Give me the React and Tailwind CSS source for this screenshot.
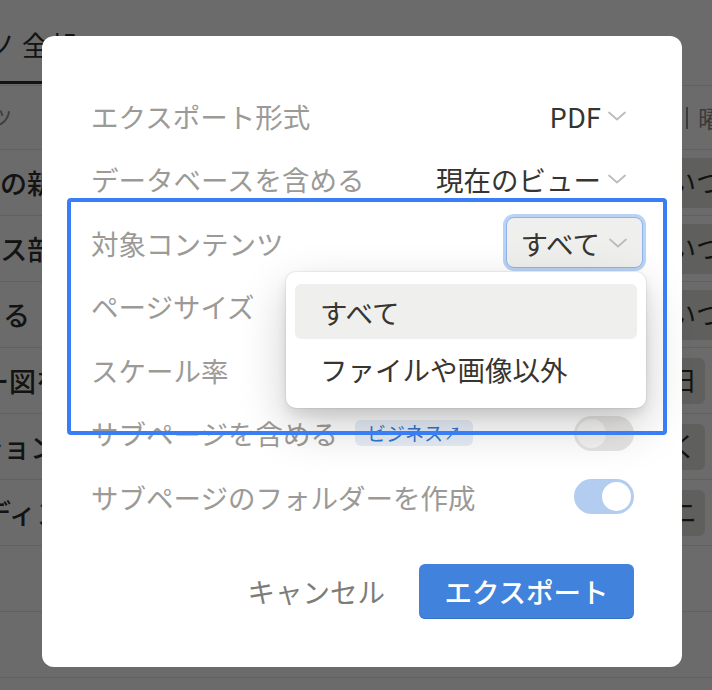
import React from "react";

const FONT = "font-['Noto_Sans_CJK_JP','Noto_Sans',sans-serif]";

function Chevron() {
  return (
    <svg width="22" height="12" viewBox="0 0 22 12" fill="none" className="shrink-0">
      <path d="M3 2.5l8 7 8-7" stroke="#bdbcb9" strokeWidth="1.8" strokeLinecap="round" strokeLinejoin="round" />
    </svg>
  );
}

function Value({ text }) {
  return (
    <div className="mr-[6px] flex items-center gap-[5px] text-[#37352f]">
      <span>{text}</span>
      <Chevron />
    </div>
  );
}

function Row({ label, children }) {
  return (
    <div className="flex h-[63.5px] items-center justify-between">
      <div className="flex items-center gap-[17px] text-[#9b9a97]">{label}</div>
      {children}
    </div>
  );
}

function BgRow({ left, leftMl, right, rightType }) {
  return (
    <div className="flex h-[66px] items-center justify-between border-b border-[#e6e6e4]">
      <div className="flex flex-col">
        <span className="whitespace-nowrap text-[27px] font-medium leading-[36px] text-[#2f2e2a]" style={{ marginLeft: leftMl }}>
          {left}
        </span>
      </div>
      {rightType === "full" ? (
        <div className="-mr-[42px] flex h-[50px] items-center rounded-[6px] bg-[#e3e2e0] pl-[8px] pr-[4px] text-[27px] text-[#2f2e2a]">
          <span className="whitespace-nowrap">いつも</span>
        </div>
      ) : (
        <div className="mr-[7px] flex h-[46px] items-center rounded-[6px] bg-[#e3e2e0] pl-[24px] pr-[8px] text-[27px] text-[#2f2e2a]">
          <span className="whitespace-nowrap">{right}</span>
        </div>
      )}
    </div>
  );
}

export default function App() {
  return (
    <div className={`relative h-[690px] w-[712px] overflow-hidden bg-white ${FONT}`}>
      {/* background page */}
      <div className="flex flex-col">
        <div className="flex h-[86px] items-start border-b border-[#e6e6e4]">
          <div className="mt-[27px] flex flex-col">
            <span className="-ml-[11px] whitespace-nowrap text-[27px] leading-[36px] text-[#2f2e2a]">ノ 全部</span>
            <div className="mt-[18px] h-[3px] w-[90px] bg-[#2f2e2a]" />
          </div>
        </div>
        <div className="flex h-[64px] items-center justify-between border-b border-[#e6e6e4]">
          <span className="-ml-[8px] text-[20px] text-[#8f8e8a]">ツ</span>
          <div className="flex items-center gap-[10px] text-[24px] text-[#8f8e8a]">
            <span className="h-[22px] w-[2px] bg-[#8f8e8a]" />
            <span className="-mr-[10px]">曜</span>
          </div>
        </div>
        <BgRow left="の新しい" leftMl="0px" rightType="full" />
        <BgRow left="イス部" leftMl="-26px" rightType="full" />
        <BgRow left="る" leftMl="3px" rightType="full" />
        <BgRow left="ー図を" leftMl="-18px" right="日" />
        <BgRow left="ション" leftMl="-24px" right="く" />
        <BgRow left="ディン" leftMl="-16px" right="ニ" />
        <div className="h-[66px] border-b border-[#e6e6e4]" />
        <div className="h-[66px] border-b border-[#e6e6e4]" />
      </div>

      {/* dim overlay */}
      <div className="absolute inset-0 bg-black/[0.58]" />

      {/* modal */}
      <div className="absolute left-[42px] top-[36px] flex h-[631px] w-[640px] flex-col rounded-[12px] bg-white pb-[48px] pl-[49px] pr-[48px] pt-[48px] text-[27.5px] leading-[40px]">
        <div className="flex flex-col">
          <Row label="エクスポート形式">
            <Value text="PDF" />
          </Row>
          <Row label="データベースを含める">
            <Value text="現在のビュー" />
          </Row>
          <Row label="対象コンテンツ">
            <div className="-mr-[9px] flex h-[51px] w-[137px] items-center justify-between rounded-[8px] border-[1.5px] border-[#8fb4ea] bg-[#efefee] pl-[13.5px] pr-[13.5px] text-[#37352f] shadow-[0_0_0_3px_#bad2f3]">
              <span>すべて</span>
              <Chevron />
            </div>
          </Row>
          <Row label="ページサイズ">
            <Value text="A4" />
          </Row>
          <Row label="スケール率">
            <Value text="100%" />
          </Row>
          <Row
            label={
              <>
                <span>サブページを含める</span>
                <span className="flex h-[26px] items-center gap-[1px] rounded-[6px] bg-[#e7eef8] px-[12px] text-[19px] leading-[26px] text-[#2f76d2]">
                  ビジネス<span className="text-[17px]">↗</span>
                </span>
              </>
            }
          >
            <div className="flex h-[35px] w-[60px] items-center rounded-full bg-[#e6e5e3] p-[3px]">
              <div className="h-[29px] w-[29px] rounded-full bg-[#f3f3f2]" />
            </div>
          </Row>
          <Row label="サブページのフォルダーを作成">
            <div className="flex h-[35px] w-[60px] items-center justify-end rounded-full bg-[#b3cdf1] p-[3px]">
              <div className="h-[29px] w-[29px] rounded-full bg-white" />
            </div>
          </Row>
        </div>

        <div className="mt-[35px] flex items-center justify-end gap-[34px]">
          <button className="text-[#7d7c78]">キャンセル</button>
          <button className="flex h-[55px] w-[215px] items-center justify-center rounded-[6px] border-b-[1.5px] border-[#3570c4] bg-[#4182dc] font-medium text-white">
            エクスポート
          </button>
        </div>

        {/* dropdown menu */}
        <div className="absolute left-[244px] top-[236px] flex w-[360px] flex-col gap-[2px] rounded-[10px] bg-white px-[9px] py-[12px] text-[#37352f] shadow-[0_0_0_1px_rgba(15,15,15,0.05),0_6px_12px_rgba(15,15,15,0.1),0_18px_48px_rgba(15,15,15,0.2)]">
          <div className="flex h-[55px] items-center rounded-[6px] bg-[#efefee] pl-[25px]">すべて</div>
          <div className="flex h-[55px] items-center rounded-[6px] pl-[25px]">ファイルや画像以外</div>
        </div>

        {/* annotation rectangle */}
        <div className="pointer-events-none absolute left-[25px] top-[162px] h-[237px] w-[600px] rounded-[4px] border-[4px] border-[#3a7ef6]" />
      </div>
    </div>
  );
}
